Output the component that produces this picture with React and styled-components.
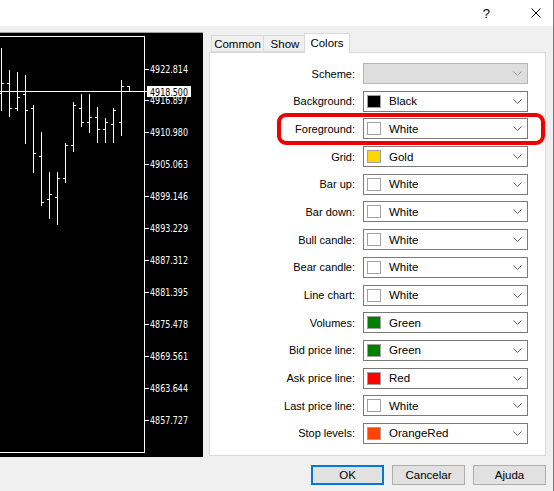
import React from 'react'
import styled, { createGlobalStyle } from 'styled-components'

const GlobalStyle = createGlobalStyle`
    html, body {
        margin: 0;
        padding: 0;
        background: #f0f0f0;
    }
    body {
        font-family: "Liberation Sans", Arial, sans-serif;
        font-size: 11px;
        color: #000;
    }
`;

const Window = styled.div`
    width: 554px;
    height: 491px;
    box-sizing: border-box;
    border-right: 1px solid #7a7a7a;
    background: #f0f0f0;
    overflow: hidden;
`;

const TitleBar = styled.div`
    height: 26px;
    background: #ffffff;
    display: flex;
    justify-content: flex-end;
    align-items: center;
    gap: 41px;
    padding-right: 12px;
`;

const HelpMark = styled.span`
    font-family: "Liberation Sans", Arial, sans-serif;
    font-size: 13px;
    color: #000;
    line-height: 1;
`;

const Body = styled.div`
    display: flex;
    align-items: flex-start;
`;

const ChartPane = styled.div`
    width: 203px;
    height: 424px;
    margin-top: 6px;
    border-top: 1px solid #a0a0a0;
    background: #000;
    flex-shrink: 0;
    svg { display: block; }
`;

const RightCol = styled.div`
    width: 337px;
    margin-left: 6px;
    padding-top: 7px;
    display: flex;
    flex-direction: column;
`;

const TabRow = styled.div`
    height: 19px;
    display: flex;
    align-items: flex-end;
    padding-left: 2px;
    position: relative;
    z-index: 1;
`;

const Tab = styled.div`
    box-sizing: border-box;
    width: ${p => p.$w}px;
    height: ${p => p.$active ? 20 : 17}px;
    margin-left: ${p => p.$ml || 0}px;
    margin-bottom: ${p => p.$active ? -1 : 0}px;
    border: 1px solid #d9d9d9;
    border-bottom: ${p => p.$active ? 'none' : '1px solid #d9d9d9'};
    background: ${p => p.$active ? '#ffffff' : '#f0f0f0'};
    display: flex;
    align-items: center;
    justify-content: center;
    padding-bottom: ${p => p.$active ? 2 : 0}px;
    font-size: 11.5px;
`;

const Panel = styled.div`
    position: relative;
    box-sizing: border-box;
    height: 404px;
    border: 1px solid #d9d9d9;
    background: #ffffff;
    padding-top: 10px;
    display: flex;
    flex-direction: column;
    gap: 6.7px;
`;

const Row = styled.div`
    display: grid;
    grid-template-columns: 145px 165px;
    column-gap: 8px;
    align-items: center;
    height: 21px;
`;

const Label = styled.div`
    text-align: right;
    white-space: nowrap;
`;

const Combo = styled.div`
    box-sizing: border-box;
    height: 21px;
    border: 1px solid ${p => p.$disabled ? '#b5b5b5' : '#7a7a7a'};
    background: ${p => p.$disabled ? '#dedede' : '#ffffff'};
    display: flex;
    align-items: center;
    padding: 0 5px 0 3px;
`;

const Swatch = styled.span`
    box-sizing: border-box;
    width: 14px;
    height: 13px;
    border: 1px solid #a0a0a0;
    background: ${p => p.$color};
    margin-right: 8px;
    flex-shrink: 0;
`;

const ComboText = styled.span`
    flex: 1;
    font-size: 11.5px;
`;

const Highlight = styled.div`
    position: absolute;
    left: 67px;
    top: 60px;
    width: 268px;
    height: 32px;
    box-sizing: border-box;
    border: 4px solid #ee0000;
    border-radius: 9px;
    pointer-events: none;
`;

const ButtonRow = styled.div`
    display: flex;
    justify-content: flex-end;
    gap: 8px;
    margin-top: 9px;
`;

const Button = styled.button`
    box-sizing: border-box;
    width: 73px;
    height: 20px;
    background: #e1e1e1;
    border: ${p => p.$primary ? '2px solid #0078d7' : '1px solid #adadad'};
    font-family: "Liberation Sans", Arial, sans-serif;
    font-size: 11.5px;
    color: #000;
    padding: 0;
`;

const bars = [
    [1, 48, 111, 93, 83], [9, 70, 117, 83, 108], [17, 72, 111, 108, 97],
    [25, 75, 144, 94, 110], [33, 105, 173, 108, 153], [41, 132, 206, 156, 202],
    [49, 172, 219, 199, 194], [57, 172, 225, 197, 178], [65, 143, 183, 178, 145],
    [73, 102, 152, 145, 105], [81, 94, 127, 108, 122], [89, 94, 133, 122, 117],
    [97, 107, 143, 117, 129], [105, 118, 143, 129, 122], [113, 108, 143, 124, 110],
    [121, 80, 136, 122, 86], [129, 86, 91, 86, 91],
];

const prices = [
    ['4922.814', 36], ['4916.897', 67], ['4910.980', 99], ['4905.063', 131],
    ['4899.146', 163], ['4893.229', 195], ['4887.312', 227], ['4881.395', 259],
    ['4875.478', 291], ['4869.561', 323], ['4863.644', 355], ['4857.727', 387],
];

function Chart() {
    const off = 33
    return (
        <svg width="203" height="424" viewBox="0 0 203 424">
            <rect x="0" y="3" width="145" height="1" fill="#fff" />
            <rect x="144" y="3" width="1" height="417" fill="#fff" />
            <rect x="0" y="419" width="145" height="1" fill="#fff" />
            {bars.map(([x, h, l, o, c]) => (
                <g key={x} fill="#fff">
                    <rect x={x} y={h - off} width="1" height={l - h} />
                    <rect x={x - 2} y={o - off} width="2" height="1" />
                    <rect x={x + 1} y={c - off} width="2" height="1" />
                </g>
            ))}
            <rect x="0" y={91 - off} width="147" height="1" fill="#fff" />
            {prices.map(([p, y]) => (
                <g key={p}>
                    <rect x="145" y={y} width="4" height="1" fill="#fff" />
                    <text x="150" y={y + 4} fill="#fff" fontFamily="DejaVu Sans, sans-serif"
                        fontSize="10.5" textLength="38" lengthAdjust="spacingAndGlyphs">{p}</text>
                </g>
            ))}
            <rect x="147" y="53" width="44" height="11" fill="#fff" />
            <text x="150" y="62.5" fill="#000" fontFamily="DejaVu Sans, sans-serif"
                fontSize="10.5" textLength="38" lengthAdjust="spacingAndGlyphs">4918.500</text>
        </svg>
    )
}

function Chevron({ color }) {
    return (
        <svg width="9" height="5" viewBox="0 0 9 5">
            <polyline points="0.5,0.5 4.5,4.5 8.5,0.5" fill="none" stroke={color} strokeWidth="1" />
        </svg>
    )
}

const rows = [
    ['Scheme:', null, ''],
    ['Background:', '#000000', 'Black'],
    ['Foreground:', '#ffffff', 'White'],
    ['Grid:', '#ffd700', 'Gold'],
    ['Bar up:', '#ffffff', 'White'],
    ['Bar down:', '#ffffff', 'White'],
    ['Bull candle:', '#ffffff', 'White'],
    ['Bear candle:', '#ffffff', 'White'],
    ['Line chart:', '#ffffff', 'White'],
    ['Volumes:', '#008000', 'Green'],
    ['Bid price line:', '#008000', 'Green'],
    ['Ask price line:', '#ff0000', 'Red'],
    ['Last price line:', '#ffffff', 'White'],
    ['Stop levels:', '#ff4500', 'OrangeRed'],
];

export default function App() {
    return (
        <>
            <GlobalStyle />
            <Window>
                <TitleBar>
                    <HelpMark>?</HelpMark>
                    <svg width="10" height="10" viewBox="0 0 10 10">
                        <path d="M0.5 0.5 L9.5 9.5 M9.5 0.5 L0.5 9.5" stroke="#000" strokeWidth="1" />
                    </svg>
                </TitleBar>
                <Body>
                    <ChartPane>
                        <Chart />
                    </ChartPane>
                    <RightCol>
                        <TabRow>
                            <Tab $w={53}>Common</Tab>
                            <Tab $w={44} $ml={-1}>Show</Tab>
                            <Tab $w={46} $ml={-3} $active>Colors</Tab>
                        </TabRow>
                        <Panel>
                            {rows.map(([label, color, name]) => (
                                <Row key={label}>
                                    <Label>{label}</Label>
                                    <Combo $disabled={!color}>
                                        {color && <Swatch $color={color} />}
                                        <ComboText>{name}</ComboText>
                                        <Chevron color={color ? '#606060' : '#9a9a9a'} />
                                    </Combo>
                                </Row>
                            ))}
                            <Highlight />
                        </Panel>
                        <ButtonRow>
                            <Button $primary>OK</Button>
                            <Button>Cancelar</Button>
                            <Button>Ajuda</Button>
                        </ButtonRow>
                    </RightCol>
                </Body>
            </Window>
        </>
    )
}
